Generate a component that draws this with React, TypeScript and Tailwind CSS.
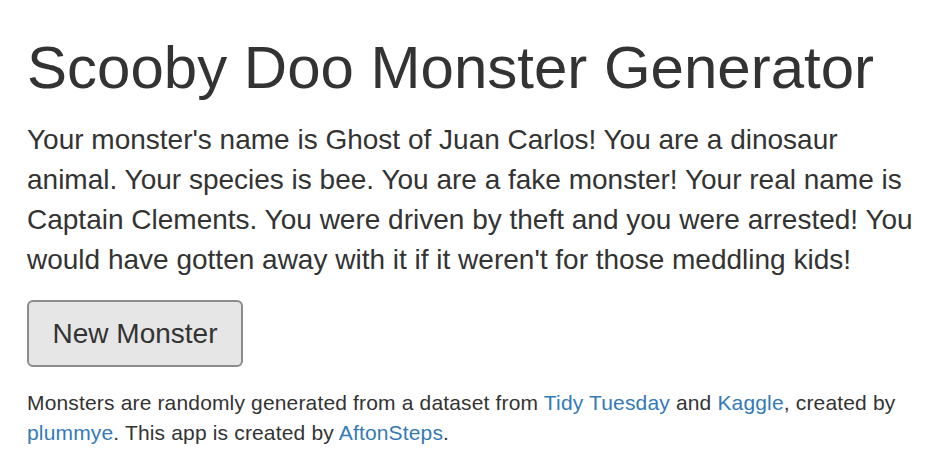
import React, { useState } from 'react';

const monster =
  "Your monster's name is Ghost of Juan Carlos! You are a dinosaur animal. Your species is bee. You are a fake monster! Your real name is Captain Clements. You were driven by theft and you were arrested! You would have gotten away with it if it weren't for those meddling kids!";

export default function App() {
  const [text] = useState(monster);

  return (
    <div className="min-h-screen bg-white pl-[27px] pr-[15px] text-[#333333] [font-family:'Liberation_Sans',Arial,sans-serif]">
      <h1 className="pt-[35px] text-[60px] leading-[66px] font-normal">Scooby Doo Monster Generator</h1>

      <p className="mt-[19px] text-[28px] leading-[40px]">{text}</p>

      <button className="mt-[20px] h-[67px] w-[216px] rounded-[6px] border-2 border-[#8c8c8c] bg-[#e6e6e6] text-[28px] text-[#333333]">
        New Monster
      </button>

      <p className="mt-[21px] text-[21px] leading-[30px] tracking-[0.16px]">
        Monsters are randomly generated from a dataset from{' '}
        <a href="#" className="text-[#337ab7]">Tidy Tuesday</a> and{' '}
        <a href="#" className="text-[#337ab7]">Kaggle</a>, created by{' '}
        <a href="#" className="text-[#337ab7]">plummye</a>. This app is created by{' '}
        <a href="#" className="text-[#337ab7]">AftonSteps</a>.
      </p>
    </div>
  );
}
